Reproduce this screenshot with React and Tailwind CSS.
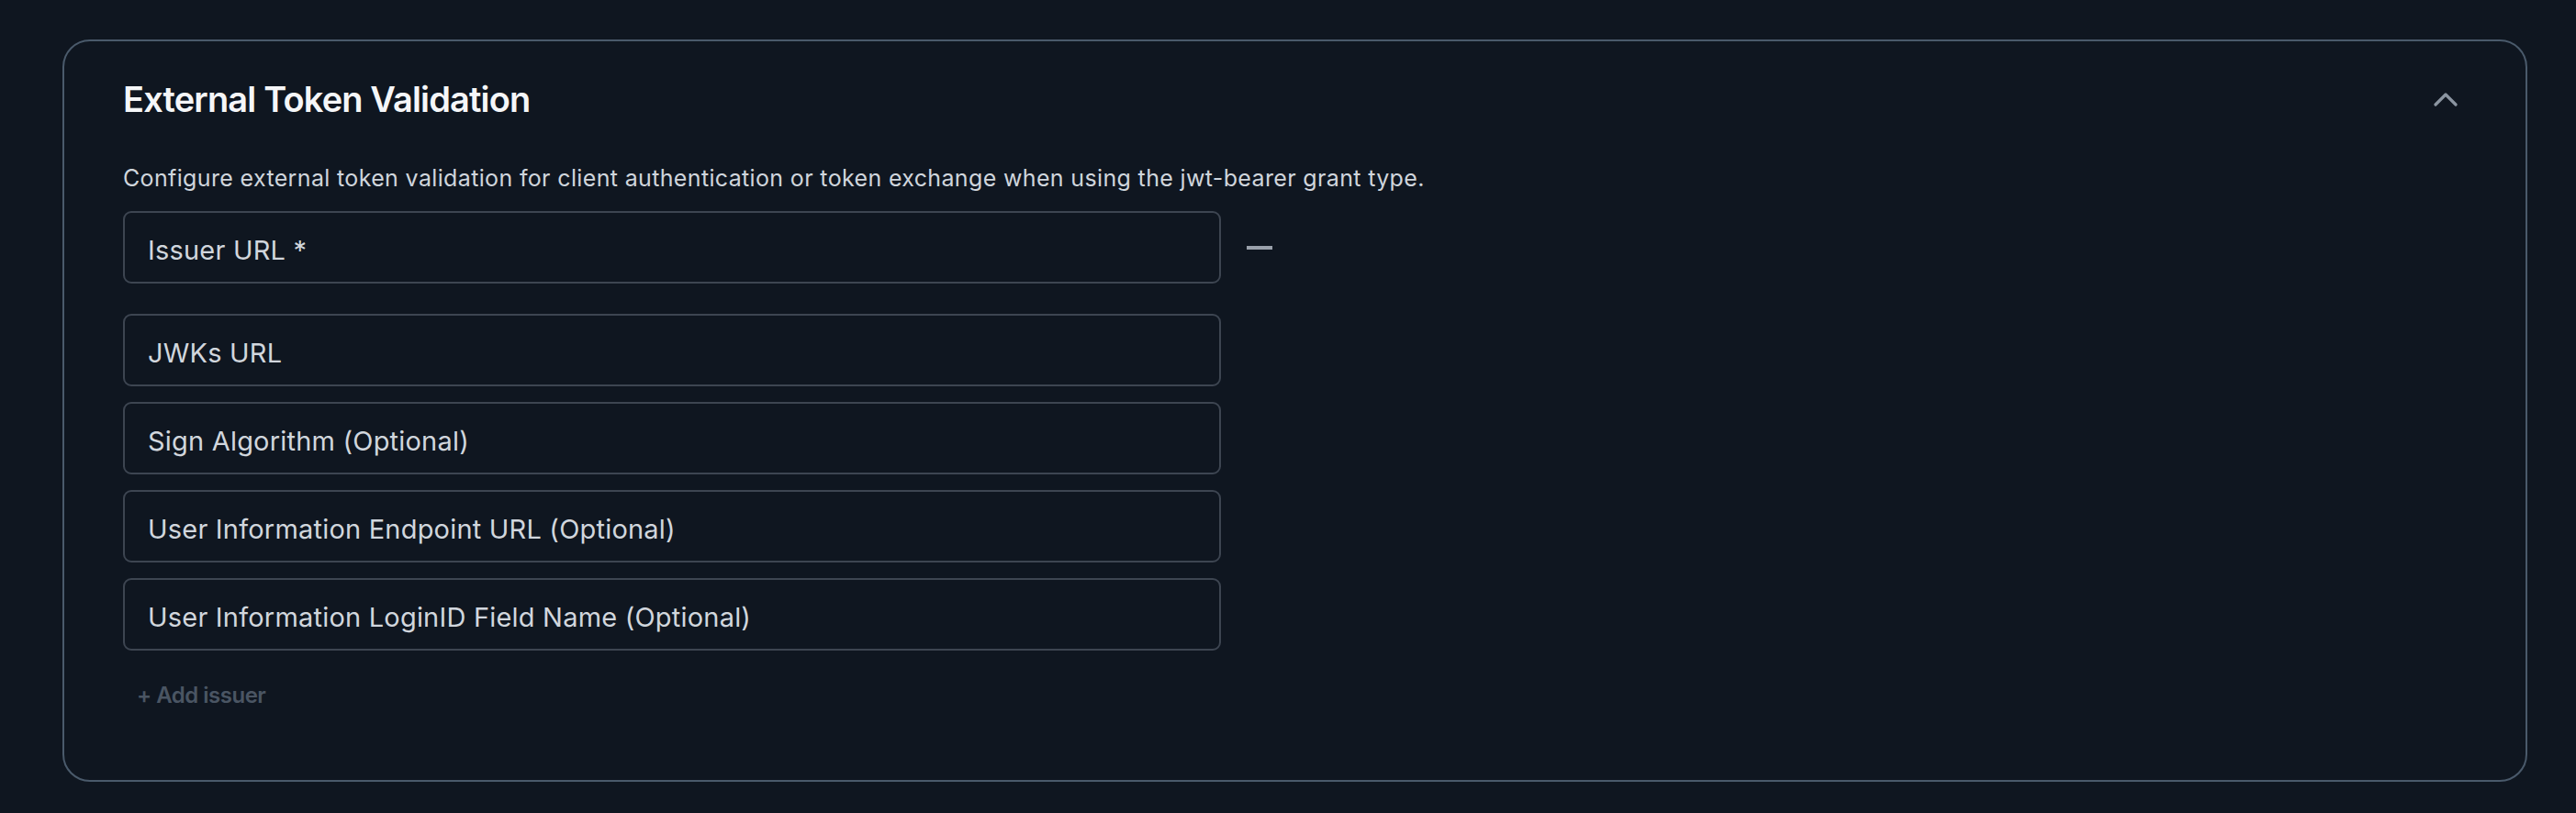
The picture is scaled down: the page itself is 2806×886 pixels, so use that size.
import React from 'react';

const fields = [
  'JWKs URL',
  'Sign Algorithm (Optional)',
  'User Information Endpoint URL (Optional)',
  'User Information LoginID Field Name (Optional)',
];

const Field = ({ placeholder }) => (
  <input
    type="text"
    placeholder={placeholder}
    className="w-[1196px] h-[79px] rounded-[9px] border-2 border-[#3d4551] bg-transparent px-[25px] pt-[6px] text-[29px] tracking-[0.2px] text-[#d1d6dd] placeholder:text-[#d1d6dd] outline-none"
  />
);

const App = () => {
  return (
    <div className="min-h-screen bg-[#0f1620] pt-[43px] pl-[68px] pr-[53px] font-['Inter',sans-serif]">
      <div className="rounded-[30px] border-2 border-[#4a5a6b] bg-[#0f1620] pl-[64px] pr-[64px] pt-[39px] pb-[76px]">
        {/* Header */}
        <div className="flex items-center justify-between h-[48px]">
          <h2 className="text-[38px] leading-[48px] font-semibold text-[#f5f6f8] tracking-[-0.85px]">
            External Token Validation
          </h2>
          <button className="w-[46px] h-[46px] flex items-center justify-center text-[#8b95a1]" aria-label="Collapse">
            <svg width="26" height="16" viewBox="0 0 26 16" fill="none">
              <path d="M2 14 13 3l11 11" stroke="currentColor" strokeWidth="3.2" strokeLinecap="round" strokeLinejoin="round" />
            </svg>
          </button>
        </div>

        <p className="mt-[46px] text-[25px] leading-[32px] tracking-[0.35px] text-[#cfd5dc]">
          Configure external token validation for client authentication or token exchange when using the jwt-bearer grant type.
        </p>

        {/* Issuer */}
        <div className="mt-[20px] flex items-center gap-[28px]">
          <Field placeholder="Issuer URL *" />
          <button className="w-[28px] h-[28px] flex items-center" aria-label="Remove issuer">
            <span className="block w-[28px] h-[4px] bg-[#9aa1ab]" />
          </button>
        </div>

        <div className="mt-[33px] flex flex-col gap-[17px]">
          {fields.map((f) => (
            <Field key={f} placeholder={f} />
          ))}
        </div>

        <button className="mt-[33px] pl-[15px] text-[24px] leading-[32px] font-semibold tracking-[-0.5px] text-[#4a5563]">
          + Add issuer
        </button>
      </div>
    </div>
  );
};

export default App;
